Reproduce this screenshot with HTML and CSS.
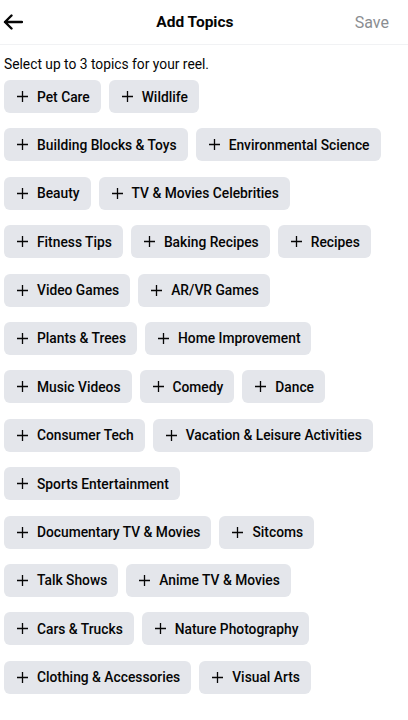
FILE: index.html
```html
<!DOCTYPE html>
<html lang="en">
<head>
  <meta charset="UTF-8" />
  <meta name="viewport" content="width=device-width, initial-scale=1.0"/>
  <title>Add Topics</title>
  <link rel="stylesheet" href="styles.css">
</head>
<body>
  <header class="top-bar">
    <button class="back-btn" aria-label="Back">
      <svg width="20" height="16" viewBox="0 0 20 16">
        <path d="M19 8H2M8.5 1.5L2 8l6.5 6.5" fill="none" stroke="#050505" stroke-width="2.4" stroke-linecap="round" stroke-linejoin="round"/>
      </svg>
    </button>
    <h1 class="title">Add Topics</h1>
    <span class="save">Save</span>
  </header>

  <main class="content">
    <p class="hint">Select up to 3 topics for your reel.</p>
    <div class="topics" id="topics"></div>
  </main>

  <script>
    const rows = [
      ["Pet Care", "Wildlife"],
      ["Building Blocks & Toys", "Environmental Science"],
      ["Beauty", "TV & Movies Celebrities"],
      ["Fitness Tips", "Baking Recipes", "Recipes"],
      ["Video Games", "AR/VR Games"],
      ["Plants & Trees", "Home Improvement"],
      ["Music Videos", "Comedy", "Dance"],
      ["Consumer Tech", "Vacation & Leisure Activities"],
      ["Sports Entertainment"],
      ["Documentary TV & Movies", "Sitcoms"],
      ["Talk Shows", "Anime TV & Movies"],
      ["Cars & Trucks", "Nature Photography"],
      ["Clothing & Accessories", "Visual Arts"]
    ];

    const list = document.getElementById("topics");
    rows.forEach(function (names) {
      const row = document.createElement("div");
      row.className = "topic-row";
      names.forEach(function (name) {
        const chip = document.createElement("button");
        chip.className = "chip";
        chip.innerHTML =
          '<svg class="plus" width="11" height="11" viewBox="0 0 11 11">' +
          '<path d="M5.5 0v11M0 5.5h11" stroke="#050505" stroke-width="1.3"/></svg>';
        const label = document.createElement("span");
        label.textContent = name;
        chip.appendChild(label);
        row.appendChild(chip);
      });
      list.appendChild(row);
    });
  </script>
</body>
</html>
```

FILE: styles.css
```css
body {
  margin: 0;
  background: #ffffff;
  font-family: Roboto, "Noto Sans", sans-serif;
  color: #050505;
}

.top-bar {
  height: 44px;
  display: flex;
  align-items: center;
  padding: 0 19px 0 2px;
  border-bottom: 1px solid #f1f2f4;
}

.back-btn {
  background: none;
  border: none;
  padding: 0;
  width: 22px;
  height: 22px;
  display: flex;
  align-items: center;
  justify-content: center;
}

.title {
  flex: 1;
  text-align: center;
  margin: 0;
  padding-left: 11px;
  font-size: 15.5px;
  font-weight: 700;
}

.save {
  font-size: 16px;
  color: #8a8d91;
}

.content {
  padding: 0 4px;
}

.hint {
  margin: 9px 0 0;
  font-size: 13.8px;
  line-height: 20px;
}

.topics {
  margin-top: 6px;
  display: flex;
  flex-direction: column;
  gap: 15.4px;
}

.topic-row {
  display: flex;
  gap: 8px;
}

.chip {
  height: 33px;
  display: flex;
  align-items: center;
  gap: 9px;
  padding: 0 11px 0 13px;
  background: #e4e6eb;
  border: none;
  border-radius: 6px;
  font-family: Roboto, "Noto Sans", sans-serif;
  font-size: 13.8px;
  font-weight: 500;
  color: #050505;
}

.plus {
  flex-shrink: 0;
}
```
